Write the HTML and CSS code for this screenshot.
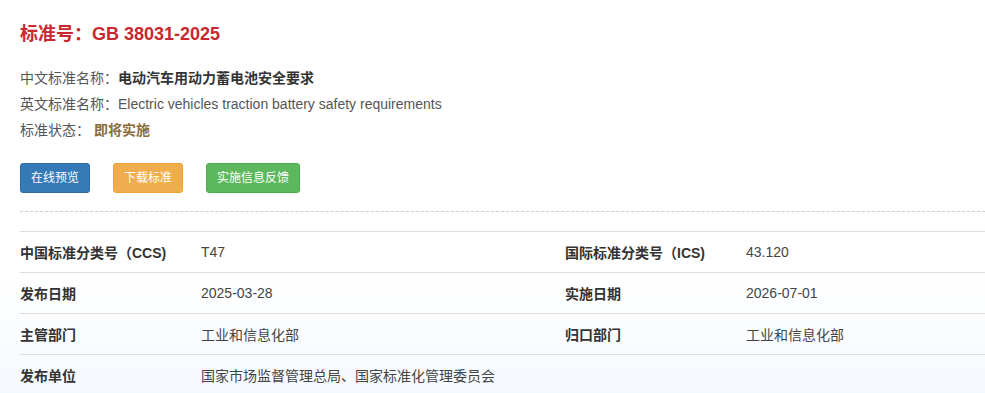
FILE: index.html
```html
<!DOCTYPE html>
<html lang="zh-CN">
<head>
    <meta charset="UTF-8">
    <meta name="viewport" content="width=device-width, initial-scale=1.0">
    <title>GB 38031-2025</title>
    <link rel="stylesheet" href="styles.css">
</head>
<body>
    <div class="detail">
        <h1 class="std-title">标准号：GB 38031-2025</h1>

        <div class="info">
            <p>中文标准名称：<strong>电动汽车用动力蓄电池安全要求</strong></p>
            <p>英文标准名称：Electric vehicles traction battery safety requirements</p>
            <p>标准状态： <span class="status">即将实施</span></p>
        </div>

        <div class="actions">
            <a class="btn btn-primary" href="#">在线预览</a>
            <a class="btn btn-warning" href="#">下载标准</a>
            <a class="btn btn-success" href="#">实施信息反馈</a>
        </div>

        <hr class="divider">

        <div class="meta">
            <div class="meta-row">
                <div class="meta-label">中国标准分类号（CCS)</div>
                <div class="meta-value">T47</div>
                <div class="meta-label">国际标准分类号（ICS)</div>
                <div class="meta-value">43.120</div>
            </div>
            <div class="meta-row">
                <div class="meta-label">发布日期</div>
                <div class="meta-value">2025-03-28</div>
                <div class="meta-label">实施日期</div>
                <div class="meta-value">2026-07-01</div>
            </div>
            <div class="meta-row">
                <div class="meta-label">主管部门</div>
                <div class="meta-value">工业和信息化部</div>
                <div class="meta-label">归口部门</div>
                <div class="meta-value">工业和信息化部</div>
            </div>
            <div class="meta-row">
                <div class="meta-label">发布单位</div>
                <div class="meta-value">国家市场监督管理总局、国家标准化管理委员会</div>
                <div class="meta-label"></div>
                <div class="meta-value"></div>
            </div>
        </div>
    </div>
</body>
</html>
```

FILE: styles.css
```css
body {
    margin: 0;
    font-family: "Liberation Sans", "Noto Sans CJK SC", sans-serif;
    font-size: 14px;
    color: #333;
    background: linear-gradient(to bottom, #fff 0, #fff 275px, #f4f9fe 400px);
    min-height: 393px;
    overflow: hidden;
}

.detail {
    padding: 20px 0 0 20px;
}

.std-title {
    margin: 0 0 17px;
    font-size: 18px;
    line-height: 28px;
    font-weight: bold;
    color: #c9282d;
}

.info p {
    margin: 0;
    line-height: 26px;
    color: #555;
}

.info strong {
    color: #333;
}

.status {
    font-weight: bold;
    color: #8a6d3b;
}

.actions {
    display: flex;
    gap: 23px;
    margin-top: 20px;
}

.btn {
    display: inline-block;
    padding: 5px 10px;
    font-size: 12px;
    line-height: 18px;
    border: 1px solid transparent;
    border-radius: 3px;
    color: #fff;
    text-decoration: none;
}

.btn-primary {
    background-color: #337ab7;
    border-color: #2e6da4;
}

.btn-warning {
    background-color: #f0ad4e;
    border-color: #eea236;
}

.btn-success {
    background-color: #5cb85c;
    border-color: #4cae4c;
}

.divider {
    margin: 18px 0 19px;
    border: 0;
    border-top: 1px dashed #ccc;
}

.meta-row {
    display: grid;
    grid-template-columns: 181px 364px 181px 1fr;
    border-top: 1px solid #ddd;
    height: 40px;
    align-items: center;
}

.meta-label {
    font-weight: bold;
    color: #333;
}

.meta-value {
    color: #444;
}
```
